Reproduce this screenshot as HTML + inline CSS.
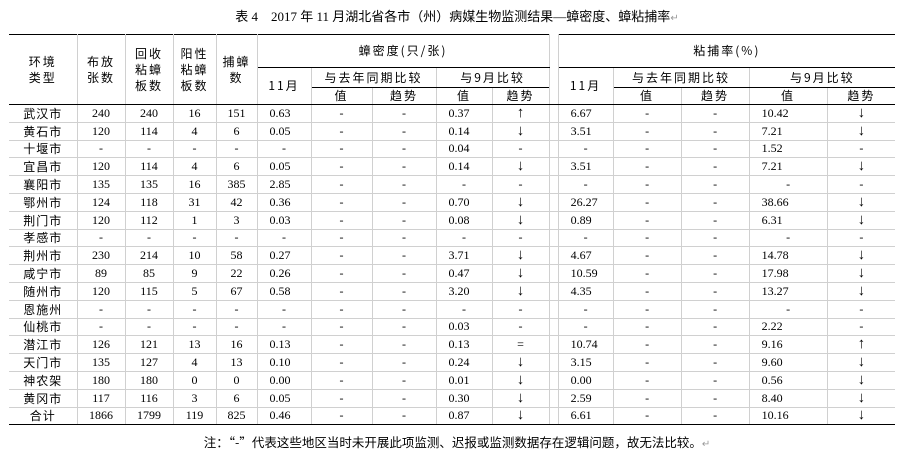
<!DOCTYPE html>
<html><head><meta charset="utf-8"><style>
body{margin:0;width:914px;height:456px;background:#fff;font-family:"Liberation Serif","Noto Sans CJK SC",serif;color:#000;position:relative;overflow:hidden}
.title{position:absolute;top:8px;left:0;width:914px;text-align:center;font-size:13px;line-height:18px}
.title .m{color:#999;font-size:10px}
table{position:absolute;left:9px;top:34px;border-collapse:collapse;table-layout:fixed;width:886px;font-size:12px}
td{border:1px solid #d0d0d0;padding:0;text-align:center;line-height:15px;white-space:nowrap;overflow:hidden}
tr.d{height:17.8px}
tr.h td{font-family:"Noto Sans CJK SC",sans-serif;font-size:12px;line-height:16px;letter-spacing:2px}
tr:first-child td{border-top:1.5px solid #000}
tr.sum td{border-top:1.5px solid #000;border-bottom:1.5px solid #000}
td:first-child{border-left:none;font-family:"Noto Sans CJK SC",sans-serif;letter-spacing:1px}
td:last-child{border-right:none}
.l{text-align:left;padding-left:12px}
.u{border-bottom:1px solid #000}
.a{font-size:15px;line-height:15px}
.note{position:absolute;top:432px;left:0;width:914px;text-align:center;font-size:12.5px;font-family:"Noto Sans CJK SC",sans-serif}
</style></head><body>
<div class="title">表 4　2017 年 11 月湖北省各市（州）病媒生物监测结果—蟑密度、蟑粘捕率<span class="m">↵</span></div>
<table>
<colgroup><col style="width:68px"><col style="width:48px"><col style="width:48px"><col style="width:43px"><col style="width:41px"><col style="width:54px"><col style="width:61px"><col style="width:64px"><col style="width:56px"><col style="width:57px"><col style="width:9px"><col style="width:55px"><col style="width:68px"><col style="width:68px"><col style="width:78px"><col style="width:68px"></colgroup>
<tr class="h" style="height:33px"><td rowspan="3" style="border-bottom:1.5px solid #000">环境<br>类型</td><td rowspan="3" style="border-bottom:1.5px solid #000">布放<br>张数</td><td rowspan="3" style="border-bottom:1.5px solid #000">回收<br>粘蟑<br>板数</td><td rowspan="3" style="border-bottom:1.5px solid #000">阳性<br>粘蟑<br>板数</td><td rowspan="3" style="border-bottom:1.5px solid #000">捕蟑<br>数</td><td colspan="5" class="u">蟑密度(只/张)</td><td rowspan="3" style="border-top:none;border-bottom:1.5px solid #000"></td><td colspan="5" class="u">粘捕率(%)</td></tr>
<tr class="h" style="height:20px"><td rowspan="2" style="border-bottom:1.5px solid #000">11月</td><td colspan="2" class="u">与去年同期比较</td><td colspan="2" class="u">与9月比较</td><td rowspan="2" style="border-bottom:1.5px solid #000">11月</td><td colspan="2" class="u">与去年同期比较</td><td colspan="2" class="u">与9月比较</td></tr>
<tr class="h" style="height:16px"><td style="border-bottom:1.5px solid #000">值</td><td style="border-bottom:1.5px solid #000">趋势</td><td style="border-bottom:1.5px solid #000">值</td><td style="border-bottom:1.5px solid #000">趋势</td><td style="border-bottom:1.5px solid #000">值</td><td style="border-bottom:1.5px solid #000">趋势</td><td style="border-bottom:1.5px solid #000">值</td><td style="border-bottom:1.5px solid #000">趋势</td></tr>
<tr class="d"><td>武汉市</td><td>240</td><td>240</td><td>16</td><td>151</td><td class="l">0.63</td><td>-</td><td>-</td><td class="l">0.37</td><td class="a">↑</td><td></td><td class="l">6.67</td><td>-</td><td>-</td><td class="l">10.42</td><td class="a">↓</td></tr>
<tr class="d"><td>黄石市</td><td>120</td><td>114</td><td>4</td><td>6</td><td class="l">0.05</td><td>-</td><td>-</td><td class="l">0.14</td><td class="a">↓</td><td></td><td class="l">3.51</td><td>-</td><td>-</td><td class="l">7.21</td><td class="a">↓</td></tr>
<tr class="d"><td>十堰市</td><td>-</td><td>-</td><td>-</td><td>-</td><td>-</td><td>-</td><td>-</td><td class="l">0.04</td><td>-</td><td></td><td>-</td><td>-</td><td>-</td><td class="l">1.52</td><td>-</td></tr>
<tr class="d"><td>宜昌市</td><td>120</td><td>114</td><td>4</td><td>6</td><td class="l">0.05</td><td>-</td><td>-</td><td class="l">0.14</td><td class="a">↓</td><td></td><td class="l">3.51</td><td>-</td><td>-</td><td class="l">7.21</td><td class="a">↓</td></tr>
<tr class="d"><td>襄阳市</td><td>135</td><td>135</td><td>16</td><td>385</td><td class="l">2.85</td><td>-</td><td>-</td><td>-</td><td>-</td><td></td><td>-</td><td>-</td><td>-</td><td>-</td><td>-</td></tr>
<tr class="d"><td>鄂州市</td><td>124</td><td>118</td><td>31</td><td>42</td><td class="l">0.36</td><td>-</td><td>-</td><td class="l">0.70</td><td class="a">↓</td><td></td><td class="l">26.27</td><td>-</td><td>-</td><td class="l">38.66</td><td class="a">↓</td></tr>
<tr class="d"><td>荆门市</td><td>120</td><td>112</td><td>1</td><td>3</td><td class="l">0.03</td><td>-</td><td>-</td><td class="l">0.08</td><td class="a">↓</td><td></td><td class="l">0.89</td><td>-</td><td>-</td><td class="l">6.31</td><td class="a">↓</td></tr>
<tr class="d"><td>孝感市</td><td>-</td><td>-</td><td>-</td><td>-</td><td>-</td><td>-</td><td>-</td><td>-</td><td>-</td><td></td><td>-</td><td>-</td><td>-</td><td>-</td><td>-</td></tr>
<tr class="d"><td>荆州市</td><td>230</td><td>214</td><td>10</td><td>58</td><td class="l">0.27</td><td>-</td><td>-</td><td class="l">3.71</td><td class="a">↓</td><td></td><td class="l">4.67</td><td>-</td><td>-</td><td class="l">14.78</td><td class="a">↓</td></tr>
<tr class="d"><td>咸宁市</td><td>89</td><td>85</td><td>9</td><td>22</td><td class="l">0.26</td><td>-</td><td>-</td><td class="l">0.47</td><td class="a">↓</td><td></td><td class="l">10.59</td><td>-</td><td>-</td><td class="l">17.98</td><td class="a">↓</td></tr>
<tr class="d"><td>随州市</td><td>120</td><td>115</td><td>5</td><td>67</td><td class="l">0.58</td><td>-</td><td>-</td><td class="l">3.20</td><td class="a">↓</td><td></td><td class="l">4.35</td><td>-</td><td>-</td><td class="l">13.27</td><td class="a">↓</td></tr>
<tr class="d"><td>恩施州</td><td>-</td><td>-</td><td>-</td><td>-</td><td>-</td><td>-</td><td>-</td><td>-</td><td>-</td><td></td><td>-</td><td>-</td><td>-</td><td>-</td><td>-</td></tr>
<tr class="d"><td>仙桃市</td><td>-</td><td>-</td><td>-</td><td>-</td><td>-</td><td>-</td><td>-</td><td class="l">0.03</td><td>-</td><td></td><td>-</td><td>-</td><td>-</td><td class="l">2.22</td><td>-</td></tr>
<tr class="d"><td>潜江市</td><td>126</td><td>121</td><td>13</td><td>16</td><td class="l">0.13</td><td>-</td><td>-</td><td class="l">0.13</td><td>=</td><td></td><td class="l">10.74</td><td>-</td><td>-</td><td class="l">9.16</td><td class="a">↑</td></tr>
<tr class="d"><td>天门市</td><td>135</td><td>127</td><td>4</td><td>13</td><td class="l">0.10</td><td>-</td><td>-</td><td class="l">0.24</td><td class="a">↓</td><td></td><td class="l">3.15</td><td>-</td><td>-</td><td class="l">9.60</td><td class="a">↓</td></tr>
<tr class="d"><td>神农架</td><td>180</td><td>180</td><td>0</td><td>0</td><td class="l">0.00</td><td>-</td><td>-</td><td class="l">0.01</td><td class="a">↓</td><td></td><td class="l">0.00</td><td>-</td><td>-</td><td class="l">0.56</td><td class="a">↓</td></tr>
<tr class="d"><td>黄冈市</td><td>117</td><td>116</td><td>3</td><td>6</td><td class="l">0.05</td><td>-</td><td>-</td><td class="l">0.30</td><td class="a">↓</td><td></td><td class="l">2.59</td><td>-</td><td>-</td><td class="l">8.40</td><td class="a">↓</td></tr>
<tr class="d sum"><td>合计</td><td>1866</td><td>1799</td><td>119</td><td>825</td><td class="l">0.46</td><td>-</td><td>-</td><td class="l">0.87</td><td class="a">↓</td><td></td><td class="l">6.61</td><td>-</td><td>-</td><td class="l">10.16</td><td class="a">↓</td></tr>
</table>
<div class="note">注：“-”代表这些地区当时未开展此项监测、迟报或监测数据存在逻辑问题，故无法比较。<span style="color:#999;font-size:10px">↵</span></div>
</body></html>
